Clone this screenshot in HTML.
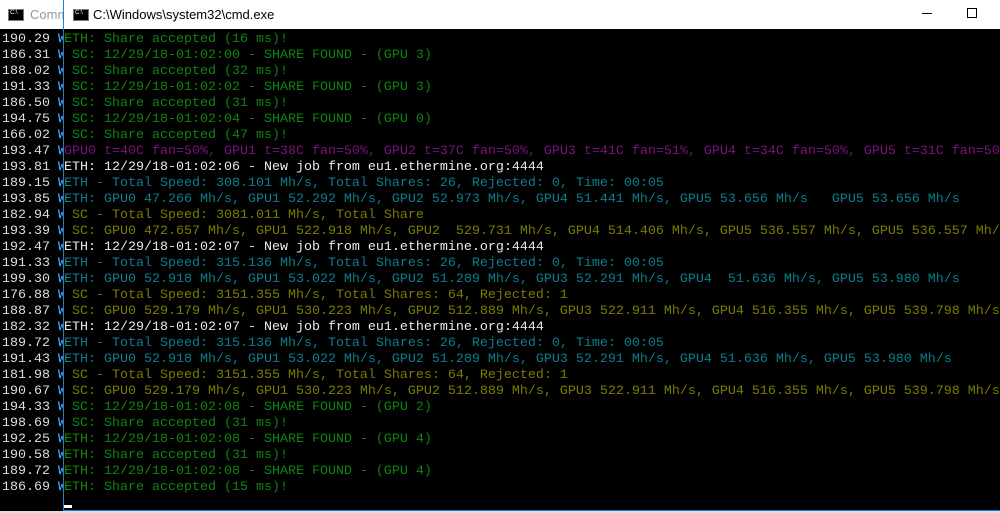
<!DOCTYPE html>
<html><head><meta charset="utf-8"><style>
*{margin:0;padding:0;box-sizing:border-box}
body{width:1000px;height:513px;overflow:hidden;background:#000;position:relative;font-family:"Liberation Mono",monospace}
.tb{position:absolute;top:0;height:29px;background:#fff}
.t{position:absolute;font-family:"Liberation Sans",sans-serif;font-size:13px;top:7px}
.ic{position:absolute;width:16px;height:12px;background:#000;border:1px solid #777}
.ic::after{content:"C:\\";position:absolute;left:1px;top:0;font-size:6px;color:#fff;font-family:"Liberation Sans",sans-serif}
pre{position:absolute;font-family:"Liberation Mono",monospace;font-size:13.33px;line-height:16px;white-space:pre}
.g{color:#0f850f}.m{color:#7e127e}.w{color:#eaeaea}.c{color:#0a7f8e}.y{color:#7c7c00}
</style></head><body>
<div class="tb" style="left:0;width:63px"></div>
<div class="ic" style="left:8px;top:9px"></div>
<div class="t" style="left:30px;color:#999">Comm</div>
<pre style="left:2px;top:32px;color:#ddd">190.29 <span style="color:#5ab0ff">W</span>
186.31 <span style="color:#5ab0ff">W</span>
188.02 <span style="color:#5ab0ff">W</span>
191.33 <span style="color:#5ab0ff">W</span>
186.50 <span style="color:#5ab0ff">W</span>
194.75 <span style="color:#5ab0ff">W</span>
166.02 <span style="color:#5ab0ff">W</span>
193.47 <span style="color:#5ab0ff">W</span>
193.81 <span style="color:#5ab0ff">W</span>
189.15 <span style="color:#5ab0ff">W</span>
193.85 <span style="color:#5ab0ff">W</span>
182.94 <span style="color:#5ab0ff">W</span>
193.39 <span style="color:#5ab0ff">W</span>
192.47 <span style="color:#5ab0ff">W</span>
191.33 <span style="color:#5ab0ff">W</span>
199.30 <span style="color:#5ab0ff">W</span>
176.88 <span style="color:#5ab0ff">W</span>
188.87 <span style="color:#5ab0ff">W</span>
182.32 <span style="color:#5ab0ff">W</span>
189.72 <span style="color:#5ab0ff">W</span>
191.43 <span style="color:#5ab0ff">W</span>
181.98 <span style="color:#5ab0ff">W</span>
190.67 <span style="color:#5ab0ff">W</span>
194.33 <span style="color:#5ab0ff">W</span>
198.69 <span style="color:#5ab0ff">W</span>
192.25 <span style="color:#5ab0ff">W</span>
190.58 <span style="color:#5ab0ff">W</span>
189.72 <span style="color:#5ab0ff">W</span>
186.69 <span style="color:#5ab0ff">W</span></pre>
<div style="position:absolute;left:63px;top:0;width:937px;height:511px;background:#000;border-left:1px solid #1883d7;border-bottom:1px solid #1883d7"></div>
<div class="tb" style="left:64px;width:936px"></div>
<div class="ic" style="left:73px;top:9px"></div>
<div class="t" style="left:93px;color:#000">C:\Windows\system32\cmd.exe</div>
<div style="position:absolute;left:922px;top:13px;width:10px;height:1px;background:#000"></div>
<div style="position:absolute;left:967px;top:8px;width:10px;height:10px;border:1px solid #000"></div>
<pre style="left:64px;top:32px"><span class="g">ETH: Share accepted (16 ms)!
 SC: 12/29/18-01:02:00 - SHARE FOUND - (GPU 3)
 SC: Share accepted (32 ms)!
 SC: 12/29/18-01:02:02 - SHARE FOUND - (GPU 3)
 SC: Share accepted (31 ms)!
 SC: 12/29/18-01:02:04 - SHARE FOUND - (GPU 0)
 SC: Share accepted (47 ms)!</span>
<span class="m">GPU0 t=40C fan=50%, GPU1 t=38C fan=50%, GPU2 t=37C fan=50%, GPU3 t=41C fan=51%, GPU4 t=34C fan=50%, GPU5 t=31C fan=50%</span>
<span class="w">ETH: 12/29/18-01:02:06 - New job from eu1.ethermine.org:4444</span>
<span class="c">ETH - Total Speed: 308.101 Mh/s, Total Shares: 26, Rejected: 0, Time: 00:05
ETH: GPU0 47.266 Mh/s, GPU1 52.292 Mh/s, GPU2 52.973 Mh/s, GPU4 51.441 Mh/s, GPU5 53.656 Mh/s   GPU5 53.656 Mh/s</span>
<span class="y"> SC - Total Speed: 3081.011 Mh/s, Total Share
 SC: GPU0 472.657 Mh/s, GPU1 522.918 Mh/s, GPU2  529.731 Mh/s, GPU4 514.406 Mh/s, GPU5 536.557 Mh/s, GPU5 536.557 Mh/s</span>
<span class="w">ETH: 12/29/18-01:02:07 - New job from eu1.ethermine.org:4444</span>
<span class="c">ETH - Total Speed: 315.136 Mh/s, Total Shares: 26, Rejected: 0, Time: 00:05
ETH: GPU0 52.918 Mh/s, GPU1 53.022 Mh/s, GPU2 51.289 Mh/s, GPU3 52.291 Mh/s, GPU4  51.636 Mh/s, GPU5 53.980 Mh/s</span>
<span class="y"> SC - Total Speed: 3151.355 Mh/s, Total Shares: 64, Rejected: 1
 SC: GPU0 529.179 Mh/s, GPU1 530.223 Mh/s, GPU2 512.889 Mh/s, GPU3 522.911 Mh/s, GPU4 516.355 Mh/s, GPU5 539.798 Mh/s</span>
<span class="w">ETH: 12/29/18-01:02:07 - New job from eu1.ethermine.org:4444</span>
<span class="c">ETH - Total Speed: 315.136 Mh/s, Total Shares: 26, Rejected: 0, Time: 00:05
ETH: GPU0 52.918 Mh/s, GPU1 53.022 Mh/s, GPU2 51.289 Mh/s, GPU3 52.291 Mh/s, GPU4 51.636 Mh/s, GPU5 53.980 Mh/s</span>
<span class="y"> SC - Total Speed: 3151.355 Mh/s, Total Shares: 64, Rejected: 1
 SC: GPU0 529.179 Mh/s, GPU1 530.223 Mh/s, GPU2 512.889 Mh/s, GPU3 522.911 Mh/s, GPU4 516.355 Mh/s, GPU5 539.798 Mh/s</span>
<span class="g"> SC: 12/29/18-01:02:08 - SHARE FOUND - (GPU 2)
 SC: Share accepted (31 ms)!
ETH: 12/29/18-01:02:08 - SHARE FOUND - (GPU 4)
ETH: Share accepted (31 ms)!
ETH: 12/29/18-01:02:08 - SHARE FOUND - (GPU 4)
ETH: Share accepted (15 ms)!</span></pre>
<div style="position:absolute;left:64px;top:505px;width:8px;height:3px;background:#fff"></div>
<div style="position:absolute;left:0;top:511px;width:1000px;height:2px;background:#ddd"></div>
</body></html>
